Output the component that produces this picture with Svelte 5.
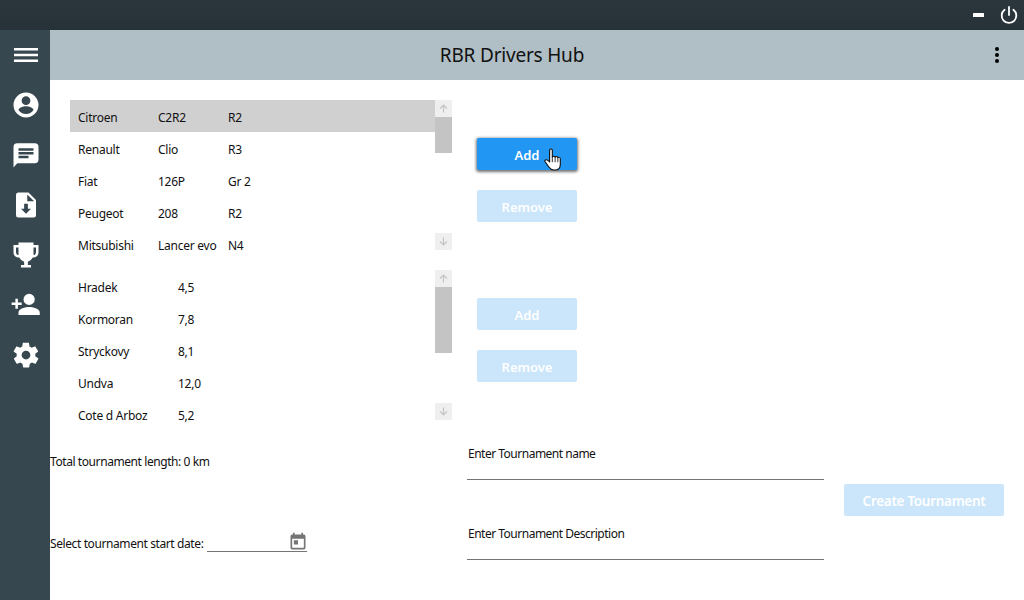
<script>
  const cars = [
    ['Citroen', 'C2R2', 'R2'],
    ['Renault', 'Clio', 'R3'],
    ['Fiat', '126P', 'Gr 2'],
    ['Peugeot', '208', 'R2'],
    ['Mitsubishi', 'Lancer evo', 'N4']
  ];
  const stages = [
    ['Hradek', '4,5'],
    ['Kormoran', '7,8'],
    ['Stryckovy', '8,1'],
    ['Undva', '12,0'],
    ['Cote d Arboz', '5,2']
  ];
</script>

<div class="app">
  <div class="titlebar">
    <svg class="minimize" width="11" height="4" viewBox="0 0 11 4"><rect width="11" height="4" fill="#fff" rx="0.5" /></svg>
    <svg class="power" width="20" height="20" viewBox="0 0 20 20" fill="none" stroke="#fff" stroke-width="1.8" stroke-linecap="round">
      <path d="M10 2v8" />
      <path d="M5.6 4.800a7.300 7.300 0 1 0 8.800 0" />
    </svg>
  </div>
  <div class="body">
    <nav class="sidebar">
      <button class="nav" aria-label="Menu">
        <svg width="24" height="24" viewBox="0 0 24 24" fill="#fff"><path d="M0 5h24v2.600H0zM0 10.700h24v2.600H0zM0 16.400h24v2.600H0z" /></svg>
      </button>
      <button class="nav" aria-label="Profile">
        <svg width="30" height="30" viewBox="0 0 24 24" fill="#fff"><path d="M12 2a10 10 0 1 0 0 20 10 10 0 0 0 0-20zm0 3a3.500 3.500 0 1 1 0 7 3.500 3.500 0 0 1 0-7zm0 14.200a7.200 7.200 0 0 1-6-3.200c0-2 4-3.100 6-3.100s6 1.100 6 3.100a7.200 7.200 0 0 1-6 3.200z" /></svg>
      </button>
      <button class="nav" aria-label="Messages">
        <svg width="30" height="30" viewBox="0 0 24 24" fill="#fff"><path d="M19 2.500H5a3 3 0 0 0-3 3v16.500l3-3.500h14a3 3 0 0 0 3-3v-10a3 3 0 0 0-3-3zM6 9.500h12v2H6zm8 5H6v-2h8zm4-6H6v-2h12z" /></svg>
      </button>
      <button class="nav" aria-label="Downloads">
        <svg width="30" height="30" viewBox="0 0 24 24" fill="#fff"><path d="M14 2H6a2 2 0 0 0-2 2v16a2 2 0 0 0 2 2h12a2 2 0 0 0 2-2V8zm-2 17l-4-4h2.500v-4h3v4H16zm1-10V3.500L18.500 9z" /></svg>
      </button>
      <button class="nav" aria-label="Tournaments">
        <svg width="30" height="30" viewBox="0 0 24 24" fill="#fff" fill-rule="evenodd"><path d="M6 2h12v2h4v6c0 2.200-1.800 4-4 4h-.6a6 6 0 0 1-3.900 3.300V20H16v2H8v-2h2.500v-2.700A6 6 0 0 1 6.600 14H6c-2.200 0-4-1.800-4-4V4h4zM4 6v3.500C4 10.900 4.900 12 6 12V6zm16 0h-2v6c1.100 0 2-1.100 2-2.500z" /></svg>
      </button>
      <button class="nav" aria-label="Add driver">
        <svg width="30" height="30" viewBox="0 0 24 24" fill="#fff"><path d="M14.500 12a4.500 4.500 0 1 0 0-9 4.500 4.500 0 0 0 0 9zM5.500 10V7h-2v3H.5v2h3v3h2v-3h3v-2zm9 3.500c-2.800 0-8.500 1.400-8.500 4.200V20h17v-2.300c0-2.800-5.700-4.200-8.500-4.200z" /></svg>
      </button>
      <button class="nav" aria-label="Settings">
        <svg width="30" height="30" viewBox="0 0 24 24" fill="#fff"><path d="M19.400 13a7.500 7.500 0 0 0 0-2l2.100-1.600a.5.5 0 0 0 .1-.6l-2-3.500a.5.5 0 0 0-.6-.2l-2.500 1a7.300 7.300 0 0 0-1.700-1l-.4-2.600a.5.5 0 0 0-.5-.4h-4a.5.5 0 0 0-.5.400l-.4 2.600a7.700 7.700 0 0 0-1.700 1l-2.500-1a.5.5 0 0 0-.6.200l-2 3.500a.5.5 0 0 0 .1.600L4.600 11a7.900 7.900 0 0 0 0 2l-2.100 1.600a.5.5 0 0 0-.1.600l2 3.500c.1.200.4.300.6.200l2.500-1c.5.400 1.100.7 1.700 1l.4 2.600c0 .2.200.4.500.4h4c.3 0 .5-.2.500-.4l.4-2.600c.6-.3 1.200-.6 1.700-1l2.500 1c.2.100.5 0 .6-.2l2-3.500a.5.5 0 0 0-.1-.6zM12 15.500a3.500 3.500 0 1 1 0-7 3.500 3.500 0 0 1 0 7z" /></svg>
      </button>
    </nav>
    <div class="main">
      <header class="header">
        <h1>RBR Drivers Hub</h1>
        <svg class="more" width="24" height="24" viewBox="0 0 24 24" fill="#000"><circle cx="12" cy="6" r="2" /><circle cx="12" cy="12" r="2" /><circle cx="12" cy="18" r="2" /></svg>
      </header>
      <div class="content">
        <div class="left">
          <div class="lists">
            <div class="list first">
              <div class="rows">
                {#each cars as car, i}
                  <div class="row" class:selected={i === 0}>
                    <span class="c1">{car[0]}</span><span class="c2">{car[1]}</span><span>{car[2]}</span>
                  </div>
                {/each}
              </div>
              <div class="scrollbar">
                <div class="arrow"><svg width="9" height="9" viewBox="0 0 9 9" fill="none" stroke="#c4c4c4" stroke-width="1.200"><path d="M4.500 8.500V1M1 4.500 4.500 1 8 4.500" /></svg></div>
                <div class="track"><div class="thumb short"></div></div>
                <div class="arrow"><svg width="9" height="9" viewBox="0 0 9 9" fill="none" stroke="#c4c4c4" stroke-width="1.200"><path d="M4.500 .5V8M1 4.500 4.500 8 8 4.500" /></svg></div>
              </div>
            </div>
            <div class="list second">
              <div class="rows">
                {#each stages as stage}
                  <div class="row">
                    <span class="s1">{stage[0]}</span><span>{stage[1]}</span>
                  </div>
                {/each}
              </div>
              <div class="scrollbar">
                <div class="arrow"><svg width="9" height="9" viewBox="0 0 9 9" fill="none" stroke="#c4c4c4" stroke-width="1.200"><path d="M4.500 8.500V1M1 4.500 4.500 1 8 4.500" /></svg></div>
                <div class="track"><div class="thumb long"></div></div>
                <div class="arrow"><svg width="9" height="9" viewBox="0 0 9 9" fill="none" stroke="#c4c4c4" stroke-width="1.200"><path d="M4.500 .5V8M1 4.500 4.500 8 8 4.500" /></svg></div>
              </div>
            </div>
          </div>
          <div class="total">Total tournament length: 0 km</div>
          <div class="date">
            <span>Select tournament start date:</span>
            <div class="picker">
              <svg width="20" height="20" viewBox="0 0 24 24" fill="#757575"><path d="M19 3h-1V1h-2v2H8V1H6v2H5a2 2 0 0 0-2 2v14a2 2 0 0 0 2 2h14a2 2 0 0 0 2-2V5a2 2 0 0 0-2-2zm0 16H5V8h14zM7 10h5v5H7z" /></svg>
            </div>
          </div>
        </div>
        <div class="right">
          <div class="actions">
            <button class="btn active">Add
              <svg class="cursor" width="18" height="24" viewBox="0 0 16 24" preserveAspectRatio="none"><path d="M5 2.200c0-1.600 2.400-1.600 2.400 0v7c.2-1.400 2.400-1.400 2.500.2.300-1.200 2.300-1.100 2.400.4.500-.9 2.200-.6 2.200 1v5.600c0 3.400-2 5.600-5 5.600H8.700c-2 0-3.200-1-4.200-2.700L1 13.700c-.8-1.400 1-2.700 2.200-1.500L5 14z" fill="#fff" stroke="#111" stroke-width="1" stroke-linejoin="round" /><path d="M7.400 9.200v5M9.900 9.400v4.800M12.300 9.800v4.400" stroke="#111" stroke-width=".8" fill="none" /></svg>
            </button>
            <button class="btn remove">Remove</button>
            <button class="btn add2">Add</button>
            <button class="btn remove">Remove</button>
          </div>
          <div class="form">
            <div class="fields">
              <div class="field">
                <div class="label">Enter Tournament name</div>
                <div class="line"></div>
              </div>
              <div class="field">
                <div class="label">Enter Tournament Description</div>
                <div class="line"></div>
              </div>
            </div>
            <button class="btn create">Create Tournament</button>
          </div>
        </div>
      </div>
    </div>
  </div>
</div>

<style>
  :global(body) {
    margin: 0;
    background: #fff;
  }
  .app {
    width: 1024px;
    height: 600px;
    display: flex;
    flex-direction: column;
    overflow: hidden;
    font-family: "Noto Sans", "Open Sans", sans-serif;
    font-size: 12px;
    color: #111;
  }
  .titlebar {
    height: 30px;
    flex: none;
    background: linear-gradient(#2c373d, #263238);
    display: flex;
    align-items: center;
    justify-content: flex-end;
    padding-right: 5px;
    gap: 15px;
  }
  .body {
    flex: 1;
    display: flex;
    min-height: 0;
  }
  .sidebar {
    width: 50px;
    flex: none;
    background: #37474f;
    display: flex;
    flex-direction: column;
    align-items: center;
  }
  .nav {
    width: 50px;
    height: 50px;
    padding: 0 0 0 2px;
    border: 0;
    background: none;
    display: flex;
    align-items: center;
    justify-content: center;
  }
  .main {
    flex: 1;
    display: flex;
    flex-direction: column;
    min-width: 0;
  }
  .header {
    height: 50px;
    flex: none;
    box-sizing: border-box;
    padding-right: 50px;
    background: #b0bec5;
    display: flex;
    align-items: center;
    justify-content: center;
    position: relative;
  }
  h1 {
    margin: 0;
    font-size: 19px;
    font-weight: 400;
    letter-spacing: -0.2px;
    color: #111;
  }
  .more {
    position: absolute;
    right: 15px;
    top: 13px;
  }
  .content {
    flex: 1;
    display: flex;
  }
  .left {
    width: 402px;
    flex: none;
  }
  .lists {
    padding: 20px 0 0 20px;
  }
  .list {
    width: 382px;
    height: 150px;
    display: flex;
    align-items: flex-start;
    letter-spacing: -0.25px;
  }
  .second {
    margin-top: 20px;
  }
  .rows {
    flex: 1;
    min-width: 0;
  }
  .row {
    height: 32px;
    display: flex;
    align-items: center;
    padding-left: 8px;
    padding-top: 2px;
    box-sizing: border-box;
  }
  .selected {
    background: #d0d0d0;
  }
  .c1 {
    width: 80px;
  }
  .c2 {
    width: 70px;
  }
  .s1 {
    width: 100px;
  }
  .scrollbar {
    width: 17px;
    height: 150px;
    flex: none;
    display: flex;
    flex-direction: column;
  }
  .arrow {
    height: 17px;
    flex: none;
    background: #efefef;
    display: flex;
    align-items: center;
    justify-content: center;
  }
  .track {
    flex: 1;
  }
  .thumb {
    background: #c4c4c4;
  }
  .short {
    height: 36px;
  }
  .long {
    height: 66px;
  }
  .total {
    margin-top: 34px;
    line-height: 16px;
    letter-spacing: -0.42px;
  }
  .date {
    margin-top: 58px;
    display: flex;
    align-items: flex-end;
    gap: 3px;
    letter-spacing: -0.4px;
  }
  .date span {
    line-height: 16px;
    width: 154px;
    white-space: nowrap;
  }
  .picker {
    width: 100px;
    height: 24px;
    box-sizing: border-box;
    border-bottom: 1px solid #757575;
    display: flex;
    justify-content: flex-end;
    align-items: flex-end;
    padding-right: 0;
  }
  .picker svg {
    margin: 0 -1px -1px 0;
  }
  .right {
    flex: 1;
    min-width: 0;
  }
  .actions {
    display: flex;
    flex-direction: column;
    align-items: flex-start;
    padding: 58px 0 0 25px;
  }
  .btn {
    width: 100px;
    height: 32px;
    border: 0;
    border-radius: 2px;
    padding: 2px 0 0;
    font: 600 13px "Noto Sans", "Open Sans", sans-serif;
    color: #fff;
    background: #cbe5fb;
    position: relative;
  }
  .active {
    background: #2196f3;
    box-shadow: 0 1px 3px 1px rgba(0, 0, 0, 0.55);
  }
  .remove {
    margin-top: 20px;
  }
  .add2 {
    margin-top: 76px;
  }
  .cursor {
    position: absolute;
    left: 67px;
    top: 10px;
  }
  .form {
    display: flex;
    padding: 61px 20px 0 15px;
    align-items: flex-start;
    justify-content: space-between;
  }
  .fields {
    width: 357px;
  }
  .field {
    height: 48px;
  }
  .field + .field {
    margin-top: 32px;
  }
  .label {
    line-height: 16px;
    padding: 3px 0 0 1px;
    height: 16px;
    letter-spacing: -0.5px;
  }
  .line {
    margin-top: 9px;
    border-bottom: 1px solid #757575;
    height: 8px;
  }
  .create {
    width: 160px;
    margin-top: 41px;
    font-size: 13.5px;
    letter-spacing: -0.3px;
    flex: none;
  }
</style>
